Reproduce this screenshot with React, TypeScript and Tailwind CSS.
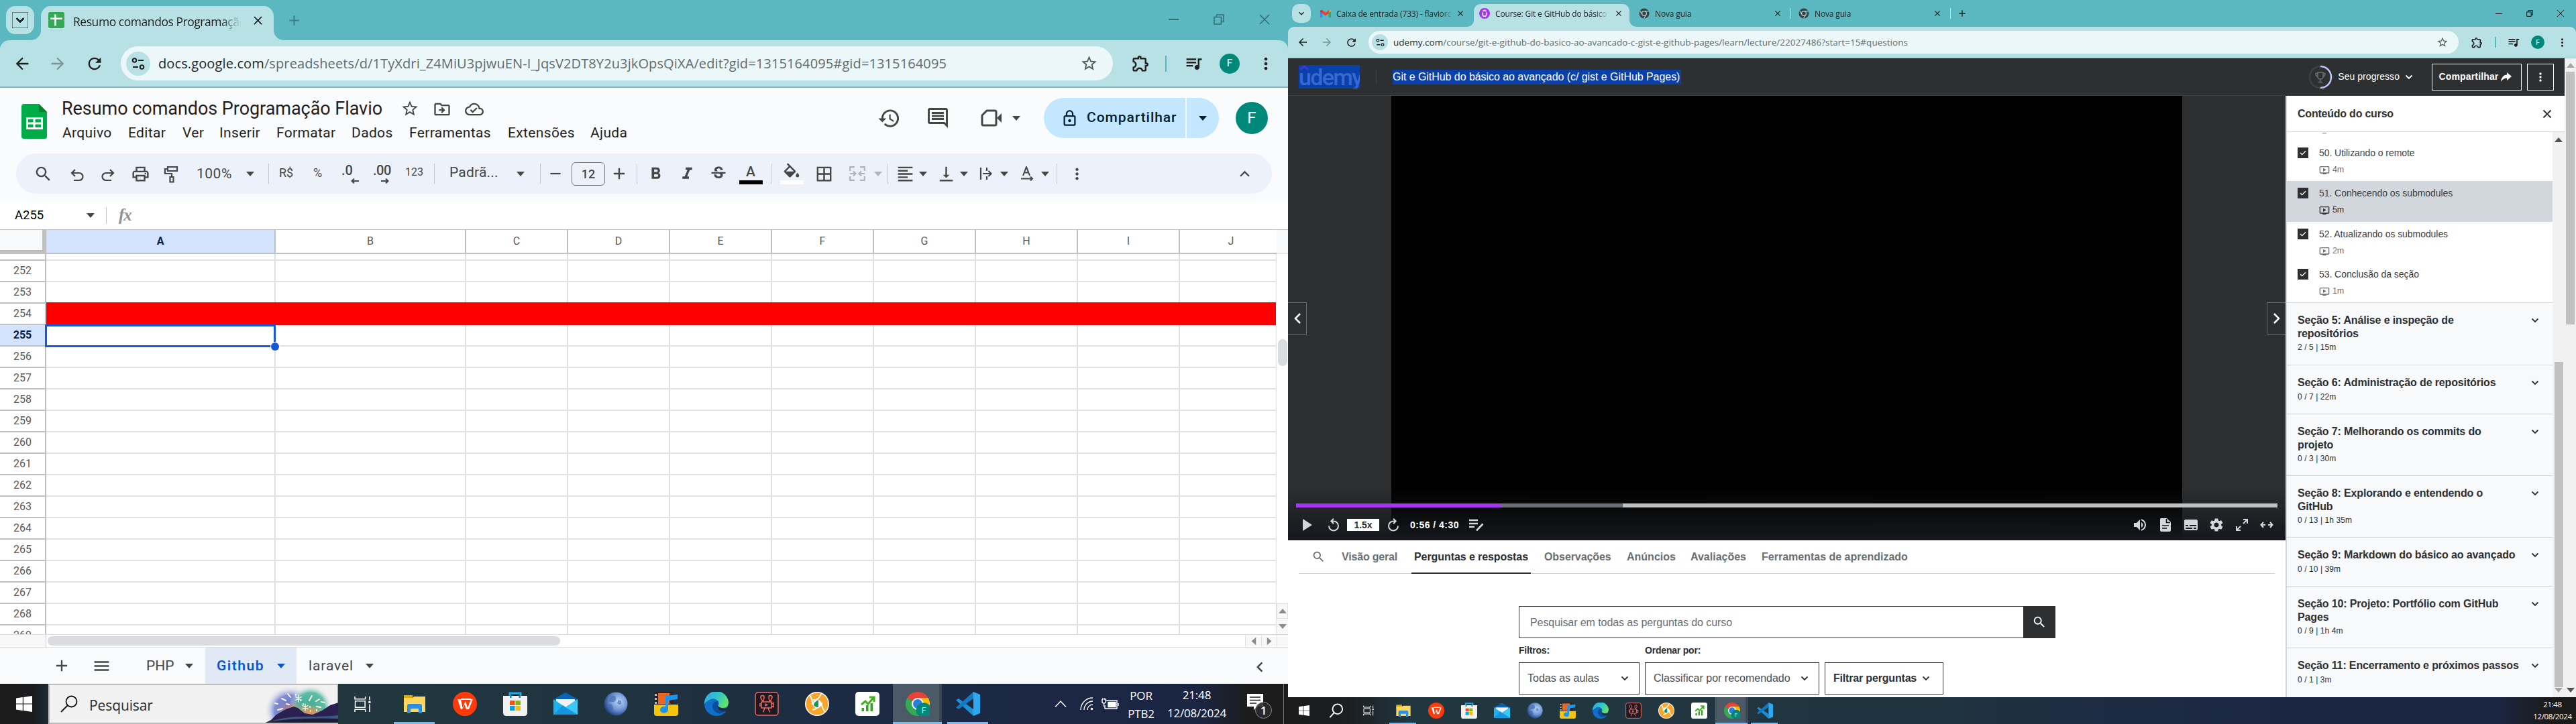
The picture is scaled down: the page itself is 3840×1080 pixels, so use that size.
import type { ReactNode } from "react";
import {
  MdAdd,
  MdArrowBack,
  MdArrowForward,
  MdBorderAll,
  MdChevronLeft,
  MdClose,
  MdExpandMore,
  MdFormatAlignLeft,
  MdFormatBold,
  MdFormatColorFill,
  MdFormatItalic,
  MdHistory,
  MdKeyboardArrowUp,
  MdLockOutline,
  MdMenu,
  MdMoreVert,
  MdOutlineCloudDone,
  MdOutlineComment,
  MdOutlineDriveFileMove,
  MdOutlineExtension,
  MdOutlinePrint,
  MdOndemandVideo,
  MdQueueMusic,
  MdRefresh,
  MdRemove,
  MdSearch,
  MdSettings,
  MdStarBorder,
  MdStrikethroughS,
  MdSubtitles,
  MdVerticalAlignBottom,
  MdVolumeUp,
} from "react-icons/md";

/* ---------- small building blocks ---------- */

function Cell({ className = "", children }: { className?: string; children?: ReactNode }) {
  return <span className={"flex shrink-0 items-center justify-center [&>svg]:shrink-0 " + className}>{children}</span>;
}

function Caret({ className = "" }: { className?: string }) {
  return (
    <svg viewBox="0 0 12 7" className={"h-[7px] w-3 shrink-0 " + className} fill="currentColor">
      <path d="M0 0h12L6 7z" />
    </svg>
  );
}

function Sep({ className = "" }: { className?: string }) {
  return <span className={"h-[30px] w-px shrink-0 bg-[#c7c7c7] " + className} />;
}

function Restore({ className = "" }: { className?: string }) {
  return (
    <svg viewBox="0 0 16 16" className={className} fill="none" stroke="currentColor" strokeWidth="1.5">
      <path d="M1 4.5h10.500v10.500H1zM4.500 4.500V1h10.500v10.500h-3.500" />
    </svg>
  );
}

function Tune({ className = "" }: { className?: string }) {
  return (
    <svg viewBox="0 0 20 20" className={className} fill="none" stroke="currentColor" strokeWidth="2">
      <circle cx="4.500" cy="5" r="2.800" />
      <path d="M10 5h8M2 15h8" />
      <circle cx="15.500" cy="15" r="2.800" />
    </svg>
  );
}

/* ---------- taskbar icons ---------- */

function WindowsLogo({ className = "" }: { className?: string }) {
  return (
    <svg viewBox="0 0 24 24" className={className} fill="#fff">
      <path d="M0 3.400 9.800 2v9.500H0zM11 1.900 24 0v11.500H11zM0 12.500h9.800V22L0 20.600zM11 12.500h13V24l-13-1.900z" />
    </svg>
  );
}

function TaskView({ className = "" }: { className?: string }) {
  return (
    <svg viewBox="0 0 24 24" className={className} fill="none" stroke="#fff" strokeWidth="1.500">
      <path d="M1 1v3.500h15V1M1 23v-3.500h15V23M1.500 7.500h14v9h-14zM22 1v5M22 12v11" />
      <path d="M20.500 9h3" strokeWidth="3" />
    </svg>
  );
}

function Explorer() {
  return (
    <svg viewBox="0 0 36 36" className="size-full">
      <path d="M2 5h13v6H2z" fill="#e8a600" />
      <path d="M2 9h13l2-2h17v23H2z" fill="#ffd65c" />
      <path d="M7 32V21q0-3 3-3h16q3 0 3 3v11h-5v-7H12v7z" fill="#2e8fe0" />
    </svg>
  );
}

function Wps() {
  return (
    <svg viewBox="0 0 36 36" className="size-full">
      <circle cx="18" cy="18" r="18" fill="#ff3a0a" />
      <path d="M7 11h5l2.500 13L19 14l3 10 5-13h3l-6 15h-4l-2.500-7-3.500 7H12z" fill="#fff" />
      <path d="M12 11h15" stroke="#fff" strokeWidth="2" />
    </svg>
  );
}

function Store() {
  return (
    <svg viewBox="0 0 36 36" className="size-full">
      <path d="M10 8V2h16v6" fill="none" stroke="#1ea7e8" strokeWidth="3" />
      <path d="M0 6h36v25q0 5-5 5H5q-5 0-5-5z" fill="#f1f1f2" />
      <path d="M10 6h2.500v3H10zM23.500 6H26v3h-2.500z" fill="#1487c4" />
      <path d="M10 13h7.500v7H10z" fill="#f25022" />
      <path d="M18.500 13H26v7h-7.500z" fill="#7fba00" />
      <path d="M10 21h7.500v7H10z" fill="#00a4ef" />
      <path d="M18.500 21H26v7h-7.500z" fill="#ffb900" />
    </svg>
  );
}

function Mail() {
  return (
    <svg viewBox="0 0 36 36" className="size-full">
      <path d="M0 11 18 1l18 10v23H0z" fill="#0a62b4" />
      <path d="M4 11h28v14H4z" fill="#f2f2f2" />
      <path d="M0 11l18 12L36 11v23H0z" fill="#1fb1ee" />
      <path d="M18 23 36 11v23H7z" fill="#3cc8f4" />
      <path d="M0 34 14 20l4 3 18 11z" fill="#1595e0" />
    </svg>
  );
}

function Moon() {
  return (
    <svg viewBox="0 0 36 36" className="size-full">
      <defs>
        <radialGradient id="moon" cx="62%" cy="40%" r="65%">
          <stop offset="0" stopColor="#bcd6f7" />
          <stop offset="0.550" stopColor="#6f96d6" />
          <stop offset="1" stopColor="#1b3d7c" />
        </radialGradient>
      </defs>
      <circle cx="18" cy="18" r="17.500" fill="url(#moon)" />
      <path d="M10 7q7-4 8 2t-5 6-5-2zM8 18q5 0 6 5t-4 4-4-5zM22 12q5 1 4 5t-6 0z" fill="#3d64a8" opacity=".6" />
    </svg>
  );
}

function Music() {
  return (
    <svg viewBox="0 0 36 36" className="size-full">
      <path d="M0 0h29v22H0z" fill="#2d2320" />
      <path d="M6 2h17v16H6z" fill="#f0641e" />
      <path d="M1 3h3v3H1zM1 9h3v3H1zM1 15h3v3H1z" fill="#bdbdbd" />
      <path d="M0 19h36v13q0 4-4 4H4q-4 0-4-4z" fill="#f7c40c" />
      <path d="M17 6l18-2v7l-14 2v14a6 5 0 1 1-4-5z" fill="#1b95f3" />
    </svg>
  );
}

function Edge() {
  return (
    <svg viewBox="0 0 36 36" className="size-full">
      <defs>
        <linearGradient id="edgeTop" x1="0" x2="1" y1="0" y2="0.500">
          <stop offset="0" stopColor="#2aa5e6" />
          <stop offset="0.600" stopColor="#33c7c8" />
          <stop offset="1" stopColor="#62e06a" />
        </linearGradient>
      </defs>
      <circle cx="18" cy="18" r="18" fill="#0f6fc9" />
      <path d="M0 18A18 18 0 0 1 36 16q0 8-9 8-7 0-6-4 2-3-1-7-6-5-13-1-5 3-7 6z" fill="url(#edgeTop)" />
      <path d="M12 20q2-7 9-6-4 3-1 9 5 6 13 3-5 8-13 6-8-3-8-12z" fill="#0b4c9c" />
      <path d="M21 14q-3 5 0 8 6 4 13 2l2-6v10l-4 1q-8 1-11-4-4-6 0-11z" fill="#1e2d3e" />
    </svg>
  );
}

function Movie() {
  return (
    <svg viewBox="0 0 36 36" className="size-full" fill="none" stroke="#ef6b5d" strokeWidth="1.500">
      <rect x="1" y="1" width="34" height="34" rx="4" fill="#1d1a26" />
      <path d="M10 15h15v9H10zM25 18l3-1.500v6L25 21M15 24.500l-2.500 6M20 24.500l2.500 6M8 17v5" />
      <path d="M12.500 14Q9 11 9 8q0-2.500 2.500-2.500T14 8q0 3-1.500 6zM22.500 14Q26 11 26 8q0-2.500-2.500-2.500T21 8q0 3 1.500 6z" />
      <path d="M15.500 17 20 19.500 15.500 22z" fill="#ef6b5d" stroke="none" />
    </svg>
  );
}

function Orange() {
  return (
    <svg viewBox="0 0 36 36" className="size-full">
      <circle cx="18" cy="18" r="18" fill="#fff" />
      <circle cx="18" cy="18" r="16.500" fill="#fba42c" />
      <path d="M7 5q5 8 4 14M30 30q-6-7-5-14M11 27q6-1 13-8M12 12q8 1 12-9" fill="none" stroke="#fff" strokeWidth="2" />
      <circle cx="18" cy="18" r="6.500" fill="#fff" />
      <path d="M20 12v11q-7 0-7-4 1-4 7-7z" fill="#15995b" />
    </svg>
  );
}

function ChartApp() {
  return (
    <svg viewBox="0 0 36 36" className="size-full">
      <rect width="36" height="36" rx="5" fill="#fff" />
      <path d="M9 19l6-5 4 4 8-9M21 8h7v7" fill="none" stroke="#3fb618" strokeWidth="3" />
      <path d="M9.500 24h3.500v5H9.500zM16 20h3.500v9H16zM22.500 17H26v12h-3.500z" fill="#2fa51e" />
    </svg>
  );
}

function Chrome() {
  return (
    <svg viewBox="0 0 36 36" className="size-full">
      <path d="M18 18 2.400 9a18 18 0 0 1 31.200 0z" fill="#ea4335" />
      <path d="M18 18V9h15.600A18 18 0 0 1 18 36z" fill="#fbbc04" />
      <path d="M2.400 9a18 18 0 0 0 15.600 27l8-13.500z" fill="#34a853" />
      <circle cx="18" cy="18" r="9" fill="#fff" />
      <circle cx="18" cy="18" r="7" fill="#2d7de0" />
      <circle cx="27" cy="27.500" r="11.300" fill="#00897b" />
      <text x="27" y="32" textAnchor="middle" fontSize="12" fontFamily="Roboto, sans-serif" fill="#cfe9e6">
        F
      </text>
    </svg>
  );
}

function VsCode() {
  return (
    <svg viewBox="0 0 36 36" className="size-full">
      <path d="M0 12.500 4 10l22 16v10z" fill="#1b8fd8" />
      <path d="M0 23.500 4 26l22-16V0z" fill="#1577bd" />
      <path d="M26 0l10 4v28l-10 4z" fill="#2fa8f0" />
    </svg>
  );
}

const APPS: { name: string; icon: ReactNode; open?: boolean; active?: boolean }[] = [
  { name: "explorer", icon: <Explorer />, open: true },
  { name: "wps", icon: <Wps /> },
  { name: "store", icon: <Store /> },
  { name: "mail", icon: <Mail /> },
  { name: "moon", icon: <Moon /> },
  { name: "music", icon: <Music /> },
  { name: "edge", icon: <Edge /> },
  { name: "movie", icon: <Movie /> },
  { name: "orange", icon: <Orange /> },
  { name: "chart", icon: <ChartApp /> },
  { name: "chrome", icon: <Chrome />, active: true },
  { name: "vscode", icon: <VsCode />, open: true },
];

function Fireworks() {
  return (
    <svg viewBox="0 0 108 56" className="h-[56px] w-[108px] shrink-0">
      <defs>
        <radialGradient id="fwBlue">
          <stop offset="0" stopColor="#5567c9" />
          <stop offset="0.600" stopColor="#6b7bd0" stopOpacity=".85" />
          <stop offset="1" stopColor="#f0f0f0" stopOpacity="0" />
        </radialGradient>
        <radialGradient id="fwGreen">
          <stop offset="0" stopColor="#3fae95" />
          <stop offset="0.650" stopColor="#4fb79f" stopOpacity=".9" />
          <stop offset="1" stopColor="#f0f0f0" stopOpacity="0" />
        </radialGradient>
        <radialGradient id="fwGlow">
          <stop offset="0" stopColor="#f58a52" />
          <stop offset="1" stopColor="#f0a060" stopOpacity="0" />
        </radialGradient>
      </defs>
      <circle cx="36" cy="38" r="38" fill="url(#fwBlue)" />
      <circle cx="67" cy="32" r="32" fill="url(#fwGreen)" />
      <ellipse cx="66" cy="40" rx="20" ry="12" fill="url(#fwGlow)" />
      <ellipse cx="38" cy="36" rx="22" ry="12" fill="url(#fwGlow)" opacity=".7" />
      <g stroke="#fff6dc" strokeWidth="2" strokeLinecap="round">
        <path d="M33 13l4 5M24 20l6 3M14 27l4 1M18 37l7-2M31 28l4 1M69 16l-4 7M80 21l-5 3M88 26l-5-1M82 33l-6-1M45 14v1M52 22v1M56 28v1M66 32v1M67 38v1M76 37v1" />
        <path d="M49 15v10M44.500 17.500l9 5M53.500 17.500l-9 5M59 28v10M55 30.500l8 5M63 30.500l-8 5" strokeWidth="1.400" />
      </g>
      <path d="M0 56 8 52 16 44l14-8 12-4 6 2 10 8 12 2 14-6 12-8 16-5v31z" fill="#2a2150" />
      <path d="M4 56q20-9 54-9t50-2v11z" fill="#3d5a80" />
      <path d="M0 56q40-8 108-6v6z" fill="#1e1a3c" />
    </svg>
  );
}

function Avatar({ className = "" }: { className?: string }) {
  return (
    <span className={"flex shrink-0 items-center justify-center rounded-full bg-[#00897b] font-['Roboto',sans-serif] text-white " + className}>F</span>
  );
}

/* ---------- spreadsheet ---------- */

const COLS = ["A", "B", "C", "D", "E", "F", "G", "H", "I", "J"];
const ROWS = [252, 253, 254, 255, 256, 257, 258, 259, 260, 261, 262, 263, 264, 265, 266, 267, 268, 269];
const GRID = "grid shrink-0 grid-cols-[69px_342px_284px_152px_152px_152px_152px_152px_152px_152px_144px] ";

function GridRow({ n, className = "h-8" }: { n?: number; className?: string }) {
  const red = n === 254;
  const selected = n === 255;
  return (
    <div className={GRID + (red ? "relative -mt-0.5 h-[34px]" : className)}>
      <div
        className={
          "flex items-center justify-center border-r-2 border-b-2 border-[#c0c0c0] text-[16px] " +
          (red ? "border-t-2 " : "") +
          (selected ? "bg-[#d3e3fd] font-bold text-[#041e49]" : "bg-white text-[#575a5a]")
        }
      >
        {n}
      </div>
      {COLS.map((c) => (
        <div
          key={c}
          className={
            red
              ? c === "J"
                ? "mr-px border-y border-[#e60000] bg-[#ff0000]"
                : "border-y border-[#e60000] bg-[#ff0000]"
              : c === "J"
                ? "border-r border-b-2 border-[#e1e1e1]"
                : "border-r-2 border-b-2 border-[#e1e1e1]"
          }
        />
      ))}
    </div>
  );
}

function MenuBar() {
  return (
    <div className="mt-0.5 flex h-7 items-center text-[21px] tracking-[0.35px] text-[#1f1f1f]">
      <span className="w-[98px] pl-px">Arquivo</span>
      <span className="w-[81px] pl-px">Editar</span>
      <span className="w-[55px] pl-px">Ver</span>
      <span className="w-[85px] pl-px">Inserir</span>
      <span className="w-[112px] pl-px">Formatar</span>
      <span className="w-[86px] pl-px">Dados</span>
      <span className="w-[147px] pl-px">Ferramentas</span>
      <span className="w-[123px] pl-px">Extensões</span>
      <span className="pl-px">Ajuda</span>
    </div>
  );
}

function SheetsToolbar() {
  return (
    <div className="mx-6 flex h-[60px] shrink-0 items-center rounded-full bg-[#edf2fa] text-[21px] whitespace-nowrap text-[#444746]">
      <Cell className="ml-7 w-6"><MdSearch className="size-[29px]" /></Cell>
      <Cell className="ml-[27px] w-6 pt-1">
        <svg viewBox="0 0 20 20" className="size-5" fill="none" stroke="currentColor" strokeWidth="2.200"><path d="M5 18h8a5.500 5.500 0 0 0 0-11H2M7 2 2 7l5 5" /></svg>
      </Cell>
      <Cell className="ml-[22px] w-6 pt-1">
        <svg viewBox="0 0 20 20" className="size-5" fill="none" stroke="currentColor" strokeWidth="2.200"><path d="M15 18H7A5.500 5.500 0 0 1 7 7h11M13 2l5 5-5 5" /></svg>
      </Cell>
      <Cell className="ml-6 w-6"><MdOutlinePrint className="size-[29px]" /></Cell>
      <Cell className="ml-[22px] w-6 pt-0.5">
        <svg viewBox="0 0 22 26" className="h-[26px] w-[22px]" fill="none" stroke="currentColor" strokeWidth="2.200"><path d="M6 2h14v6H6zM6 5H2v7h10v5M9.500 17h5v7.500h-5z" /></svg>
      </Cell>
      <span className="ml-[26px] w-[54px] pt-0.5 tracking-[0.5px]">100%</span>
      <Caret className="ml-5" />
      <Sep className="ml-[21px]" />
      <span className="ml-[15px] w-6 pb-1 text-[18px]">R$</span>
      <span className="ml-[27px] w-[17px] pb-1 text-[18px]">%</span>
      <span className="relative ml-[25px] w-[26px] pb-2.5 text-[20px] leading-none font-medium">
        .0
        <svg viewBox="0 0 12 8" className="absolute right-0 bottom-0 h-2 w-3" fill="none" stroke="currentColor" strokeWidth="2"><path d="M12 4H2M5 .5 1.500 4 5 7.500" /></svg>
      </span>
      <span className="relative ml-[21px] w-7 pb-2.5 text-[20px] leading-none font-medium tracking-[-0.5px]">
        .00
        <svg viewBox="0 0 12 8" className="absolute right-1 bottom-0 h-2 w-3" fill="none" stroke="currentColor" strokeWidth="2"><path d="M0 4h10M7 .5 10.500 4 7 7.500" /></svg>
      </span>
      <span className="ml-5 w-[27px] pb-1 text-[16px]">123</span>
      <Sep className="ml-4" />
      <span className="ml-[22px] w-[74px] pb-0.5 tracking-[0.2px]">Padrã...</span>
      <Caret className="ml-[26px]" />
      <Sep className="ml-[23px]" />
      <Cell className="ml-3 w-5"><MdRemove className="size-[26px]" /></Cell>
      <span className="ml-3.5 flex h-[35px] w-[50px] shrink-0 items-center justify-center rounded-[6px] border border-[#747775] text-[18px] font-medium">12</span>
      <Cell className="ml-[11px] w-5"><MdAdd className="size-[28px]" /></Cell>
      <Sep className="ml-4" />
      <Cell className="ml-[15px] w-6"><MdFormatBold className="size-[29px]" /></Cell>
      <Cell className="ml-[23px] w-6"><MdFormatItalic className="size-[29px]" /></Cell>
      <Cell className="ml-[23px] w-6"><MdStrikethroughS className="size-[28px]" /></Cell>
      <span className="ml-[18px] flex w-9 shrink-0 flex-col items-center pt-[1px]">
        <span className="h-6 text-[21px] leading-[22px] font-medium">A</span>
        <span className="h-1.5 w-[35px] bg-black" />
      </span>
      <Sep className="ml-3" />
      <span className="ml-3 flex w-9 shrink-0 flex-col items-center">
        <svg viewBox="0 0 24 18" className="-mt-3 h-[23px] w-[30px]"><g fill="currentColor"><MdFormatColorFill size={24} /></g></svg>
        <span className="-mb-3 mt-[3px] h-1.5 w-[35px] bg-white" />
      </span>
      <Cell className="ml-[18px] w-6"><MdBorderAll className="size-[29px]" /></Cell>
      <Cell className="ml-[25px] w-[26px] text-[#b0b4b9]">
        <svg viewBox="0 0 24 22" className="h-[22px] w-6" fill="none" stroke="currentColor" strokeWidth="2.200"><path d="M8 1.200H1.200V7M1.200 15v5.800H8M16 1.200h6.800V7M22.800 15v5.800H16M1 11h8M6 7.500 9.500 11 6 14.500M23 11h-8M18 7.500 14.500 11l3.500 3.500" /></svg>
      </Cell>
      <Caret className="ml-3 text-[#b0b4b9]" />
      <Sep className="ml-2" />
      <Cell className="ml-[13px] w-6"><MdFormatAlignLeft className="size-[29px]" /></Cell>
      <Caret className="ml-[9px]" />
      <Cell className="ml-4 w-6"><MdVerticalAlignBottom className="size-[29px]" /></Cell>
      <Caret className="ml-[9px]" />
      <Cell className="ml-[15px] w-6">
        <svg viewBox="0 0 20 20" className="size-5" fill="none" stroke="currentColor" strokeWidth="2.200"><path d="M2 1v18M11 1v5M11 14v5M5 10h12M13.500 6l4 4-4 4" /></svg>
      </Cell>
      <Caret className="ml-[9px]" />
      <Cell className="ml-4 w-6">
        <svg viewBox="0 0 20 22" className="h-[22px] w-5" fill="none" stroke="currentColor" strokeWidth="2"><path d="M4 14 9 1l5 13M5.500 9.500h7M1 18.500h17M15 15.500l3 3-3 3" /></svg>
      </Cell>
      <Caret className="ml-[9px]" />
      <Sep className="ml-[11px]" />
      <Cell className="ml-[17px] w-6"><MdMoreVert className="size-[27px]" /></Cell>
      <Cell className="mr-[29px] ml-auto w-6"><MdKeyboardArrowUp className="size-[29px]" /></Cell>
    </div>
  );
}

function SheetsWindow() {
  return (
    <section className="flex h-[1080px] w-[1920px] shrink-0 flex-col overflow-hidden bg-[#5bb8c1] whitespace-nowrap">
      {/* tab strip */}
      <div className="flex h-[60px] shrink-0 items-start font-['Open_Sans',sans-serif] text-[#1f1f1f]">
        <Cell className="mt-[9px] ml-[9px] size-[42px] rounded-[14px] bg-[#b8e1e5]"><MdExpandMore className="size-6" strokeWidth={1} stroke="currentColor" /></Cell>
        <div className="relative mt-[9px] ml-[10px] flex h-[51px] w-[347px] items-center rounded-t-[15px] bg-[#b8e1e5] pb-[9px] before:absolute before:bottom-0 before:-left-[15px] before:size-[15px] before:rounded-br-[15px] before:shadow-[6px_6px_0_6px_#b8e1e5] after:absolute after:-right-[15px] after:bottom-0 after:size-[15px] after:rounded-bl-[15px] after:shadow-[-6px_6px_0_6px_#b8e1e5]">
          <svg viewBox="0 0 24 24" className="z-10 ml-[11px] size-6 shrink-0">
            <rect width="24" height="24" rx="3" fill="#34a853" />
            <path d="M3 9.800h18M10.500 3.500v17" stroke="#fff" strokeWidth="2.600" />
          </svg>
          <span className="ml-[13px] w-[250px] overflow-hidden mask-r-from-88% pt-1 text-[17.500px] tracking-[-0.45px]">Resumo comandos Programação</span>
          <Cell className="ml-[15px] w-5"><MdClose className="size-[21px]" /></Cell>
        </div>
        <Cell className="mt-[9px] ml-[21px] h-[42px] w-[18px] text-[#3d8088]"><MdAdd className="size-[25px]" /></Cell>
        <div className="mr-px ml-auto flex h-[58px] items-center text-[#356f76]">
          <Cell className="w-[68px]"><span className="h-0.5 w-[15px] bg-current" /></Cell>
          <Cell className="w-[68px]"><Restore className="size-4" /></Cell>
          <Cell className="w-[68px]"><svg viewBox="0 0 16 16" className="size-4" stroke="currentColor" strokeWidth="1.500"><path d="M1 1l14 14M15 1 1 15" /></svg></Cell>
        </div>
      </div>
      {/* address bar */}
      <div className="relative flex h-[71px] shrink-0 items-center rounded-t-[14px] border-b-2 border-[#8fb3b9] bg-[#b8e1e5] text-[#1f1f1f]">
        <Cell className="ml-[19px] w-7"><MdArrowBack className="size-[28px]" /></Cell>
        <Cell className="ml-[25px] w-7 text-[#78959a]"><MdArrowForward className="size-[28px]" /></Cell>
        <Cell className="ml-[27px] w-7"><MdRefresh className="size-[28px]" /></Cell>
        <div className="ml-[25px] flex h-[51px] w-[1479px] items-center rounded-full bg-[#ebf7f8]">
          <Cell className="ml-2 size-9 rounded-full bg-[#b8e1e5]"><Tune className="size-5" /></Cell>
          <span className="ml-3 font-['Open_Sans',sans-serif] text-[20px] tracking-[0.12px] text-[#5f6b6d]">
            <span className="text-[#1f1f1f]">docs.google.com</span>/spreadsheets/d/1TyXdri_Z4MiU3pjwuEN-I_JqsV2DT8Y2u3jkOpsQiXA/edit?gid=1315164095#gid=1315164095
          </span>
          <Cell className="mr-[22px] ml-auto w-7 text-[#4a5759]"><MdStarBorder className="size-[27px]" /></Cell>
        </div>
        <Cell className="ml-[27px] w-7"><MdOutlineExtension className="size-[29px]" /></Cell>
        <span className="ml-[23px] h-6 w-0.5 bg-[#5bb8c1]" />
        <Cell className="ml-[26px] w-7"><MdQueueMusic className="size-[29px]" /></Cell>
        <Avatar className="ml-[25px] size-[30px] text-[15px]" />
        <Cell className="ml-[27px] w-6"><MdMoreVert className="size-[28px]" /></Cell>
      </div>

      <div className="flex flex-1 flex-col overflow-hidden bg-[#f9fbfd] font-['Roboto',sans-serif]">
        {/* document header */}
        <div className="flex h-[98px] shrink-0 items-start">
          <svg viewBox="0 0 38 52" className="mt-6 ml-8 h-[52px] w-[38px] shrink-0">
            <path d="M3.500 0H26l12 12v36.500q0 3.500-3.500 3.500h-31Q0 52 0 48.500v-45Q0 0 3.500 0z" fill="#00ac47" />
            <path d="M26 0l12 12H26z" fill="#00832d" />
            <path d="M7 20h25v18H7zM10 23v4.500h7.500V23zm10.500 0v4.500H29V23zM10 30.500V35h7.500v-4.500zm10.500 0V35H29v-4.500z" fill="#fff" fillRule="evenodd" />
          </svg>
          <div className="ml-[22px] flex flex-col pt-[10px]">
            <div className="flex h-[42px] items-center text-[#444746]">
              <span className="w-[478px] text-[27px] tracking-[-0.05px] text-[#1f1f1f]">Resumo comandos Programação Flavio</span>
              <Cell className="ml-7 w-[26px]"><MdStarBorder className="size-[28px]" /></Cell>
              <Cell className="ml-[22px] w-[26px] pt-0.5"><MdOutlineDriveFileMove className="size-[28px]" /></Cell>
              <Cell className="ml-[21px] w-7 pt-0.5"><MdOutlineCloudDone className="size-[28px]" /></Cell>
            </div>
            <MenuBar />
          </div>
          <div className="mr-[30px] ml-auto flex h-[90px] items-center text-[#444746]">
            <Cell className="w-[34px]"><MdHistory className="size-[35px]" /></Cell>
            <Cell className="ml-10 w-8"><MdOutlineComment className="size-[36px]" /></Cell>
            <Cell className="ml-12 w-8">
              <svg viewBox="0 0 32 26" className="h-[26px] w-8">
                <path d="M9 2h12q2 0 2 2v18q0 2-2 2H4q-2 0-2-2V9z" fill="none" stroke="currentColor" strokeWidth="3" strokeLinejoin="round" />
                <path d="M24 13l7-7v14z" fill="currentColor" />
              </svg>
            </Cell>
            <Caret className="ml-[15px]" />
            <div className="ml-[35px] flex h-[60px] w-[261px] items-center rounded-full bg-[#c2e7ff] text-[#001d35]">
              <Cell className="ml-[26px] w-6"><MdLockOutline className="size-[27px]" /></Cell>
              <span className="ml-3.5 w-[136px] text-[21px] font-medium tracking-[0.95px]">Compartilhar</span>
              <span className="ml-[11px] h-[60px] w-0.5 bg-[#f9fbfd]" />
              <Caret className="ml-[18px]" />
            </div>
            <Avatar className="ml-[25px] size-12 text-[24px]" />
          </div>
        </div>
        <SheetsToolbar />
        {/* formula bar */}
        <div className="mt-3 flex h-[42px] shrink-0 items-center border-b border-[#c0c0c0] bg-white">
          <span className="ml-[22px] w-[50px] text-[18.500px] text-black">A255</span>
          <Caret className="ml-[57px] text-[#444746]" />
          <span className="ml-[17px] h-[25px] w-px bg-[#c7c7c7]" />
          <span className="ml-[18px] pb-0.5 font-['Liberation_Serif',serif] text-[25px] font-bold tracking-[-1px] text-[#8f9191] italic">fx</span>
        </div>
        {/* grid */}
        <div className="flex h-[603px] shrink-0 bg-white">
          <div className="relative flex h-[603px] w-[1903px] shrink-0 flex-col overflow-hidden">
            <div className={GRID + "h-9 text-[16px] text-[#575a5a]"}>
              <div className="border-r-[6px] border-b-[6px] border-[#c0c0c0] bg-[#f8f9fa]" />
              {COLS.map((c) => (
                <div
                  key={c}
                  className={
                    "flex items-center justify-center border-b-2 border-[#c0c0c0] " +
                    (c === "A" ? "border-r-2 bg-[#d3e3fd] font-bold text-[#041e49]" : c === "J" ? "bg-white pl-2" : "border-r-2 bg-white")
                  }
                >
                  {c}
                </div>
              ))}
            </div>
            <GridRow className="h-2.5" />
            {ROWS.map((n) => (
              <GridRow key={n} n={n} />
            ))}
            {/* selection frame drawn over the cells */}
            <div className="absolute top-[141px] left-[67px] h-[34px] w-[344px] border-[3px] border-[#1558d6]">
              <span className="absolute -right-2 -bottom-2 size-3 rounded-full bg-[#1558d6] ring-1 ring-white" />
            </div>
          </div>
          <div className="flex w-[17px] flex-col">
            <div className="h-9 border-b border-[#e1e1e1] bg-[#f8f9fa]" />
            <span className="mt-[127px] ml-0.5 h-10 w-3.5 rounded-full bg-[#dadce0]" />
            <div className="mt-auto flex h-[46px] flex-col bg-[#f8f8f8] text-[#8b8b8b]">
              <Cell className="h-[23px] border border-[#e1e1e1]"><Caret className="h-[6px] w-2 rotate-180" /></Cell>
              <Cell className="h-[23px]"><Caret className="h-[6px] w-2" /></Cell>
            </div>
          </div>
        </div>
        {/* horizontal scroll */}
        <div className="flex h-5 shrink-0 items-center border-y border-[#dadce0] bg-white text-[#8b8b8b]">
          <span className="h-full w-[69px] border-r border-[#d0d0d0] bg-[#f8f8f8]" />
          <span className="ml-0.5 h-3.5 w-[764px] rounded-full bg-[#dadce0]" />
          <Cell className="ml-auto h-full w-6 border-l border-[#e1e1e1] bg-[#f8f8f8]"><Caret className="h-[6px] w-2 rotate-90" /></Cell>
          <Cell className="h-full w-6 border-x border-[#e1e1e1] bg-[#f8f8f8]"><Caret className="h-[6px] w-2 -rotate-90" /></Cell>
          <span className="h-full w-4 bg-[#f8f8f8]" />
        </div>
        {/* sheet tabs */}
        <div className="flex h-[54px] shrink-0 items-center text-[21px] text-[#444746]">
          <Cell className="ml-[78px] w-7"><MdAdd className="size-[28px]" /></Cell>
          <Cell className="ml-[31px] w-7"><MdMenu className="size-[29px]" /></Cell>
          <span className="ml-[53px] w-[42px] pt-0.5">PHP</span>
          <Caret className="ml-4" />
          <div className="ml-[18px] flex h-full w-[136px] items-center bg-[#e1e9f7] text-[#0b57d0]">
            <span className="ml-[17px] w-[73px] pt-0.5 font-semibold tracking-[1.500px]">Github</span>
            <Caret className="ml-[17px]" />
          </div>
          <span className="ml-[18px] w-[68px] pt-0.5 tracking-[0.9px]">laravel</span>
          <Caret className="ml-[17px]" />
          <Cell className="mt-1 mr-7 ml-auto w-7"><MdChevronLeft className="size-[30px]" /></Cell>
        </div>
      </div>

      {/* taskbar */}
      <div className="flex h-[60px] shrink-0 items-center font-['Open_Sans',sans-serif] [background-image:linear-gradient(90deg,#1b1b1b_0,#1b1c1e_50px,#1c3038_76px,#21373f_520px,#20343f_900px,#1d2c42_1200px,#1b2845_1500px,#1b2644_1780px,#1c1c1e_1860px,#1b1b1b_1920px)]">
        <Cell className="w-[72px]"><WindowsLogo className="size-6" /></Cell>
        <div className="flex h-[60px] w-[432px] shrink-0 items-center border-2 border-[#bdbdbd] bg-[#f1f1f1]">
          <svg viewBox="0 0 26 26" className="ml-4 size-[26px] shrink-0" fill="none" stroke="#111" strokeWidth="1.800"><circle cx="16.500" cy="9.500" r="8" /><path d="M10.500 15.500 1 25" /></svg>
          <span className="ml-[17px] pt-1.5 text-[21px] tracking-[-0.1px] text-[#2b2b2b]">Pesquisar</span>
          <div className="-mr-0.5 ml-auto"><Fireworks /></div>
        </div>
        <Cell className="w-[72px]"><TaskView className="size-[25px]" /></Cell>
        <div className="ml-1 flex h-full">
          {APPS.map((a) => (
            <div key={a.name} className="relative flex h-full w-[75px] items-center justify-center">
              {a.active && <span className="absolute inset-y-0 right-px left-px border-r-4 border-[#3b4854] bg-[#4c5a67]" />}
              <span className="relative size-9">{a.icon}</span>
              {(a.open || a.active) && (
                <span className={a.active ? "absolute bottom-0 left-px h-[3px] w-[73px] bg-[#76b9ed]" : "absolute bottom-0 left-[7px] h-[3px] w-[61px] bg-[#76b9ed]"} />
              )}
            </div>
          ))}
        </div>
        <div className="ml-auto flex h-full items-center text-[17px] tracking-[-0.2px] text-white">
          <svg viewBox="0 0 18 10" className="h-[18px] w-[18px]" fill="none" stroke="#fff" strokeWidth="1.500"><path d="M1 9.500 9 1l8 8.500" /></svg>
          <svg viewBox="0 0 20 20" className="ml-5 size-5" fill="none" stroke="#fff" strokeWidth="1.300"><path d="M1 19A18 18 0 0 1 19 1M6 19A13 13 0 0 1 19 6M11 19a8 8 0 0 1 8-8" /><circle cx="17.500" cy="17.500" r="1.800" fill="#fff" stroke="none" /></svg>
          <svg viewBox="0 0 26 18" className="ml-3 h-[18px] w-[26px]" fill="none" stroke="#fff" strokeWidth="1.400"><path d="M7 4h16v12H5v-5M25 8v4" /><path d="M10 6.500h11v7H10z" fill="#fff" /><path d="M1 2v4q0 2 2.500 2T6 6V2M3.500 8v5M2 0v3M5 0v3" /></svg>
          <div className="ml-3.5 flex w-[38px] flex-col items-center pt-0.5 leading-[27px]">
            <span>POR</span>
            <span>PTB2</span>
          </div>
          <div className="ml-[17px] flex w-[94px] flex-col items-center leading-[27px]">
            <span>21:48</span>
            <span>12/08/2024</span>
          </div>
          <div className="relative ml-7 h-[30px] w-[46px]">
            <svg viewBox="0 0 24 24" className="size-6"><path d="M0 0h24v19h-9l-5 5v-5H0z" fill="#fff" /><path d="M4 5h16M4 9.500h16M4 14h10" stroke="#1b1b1b" strokeWidth="1.300" /></svg>
            <span className="absolute top-3 left-3 flex size-[25px] items-center justify-center rounded-full border border-[#8b8b8b] bg-[#2b2b2b]/90 text-[17px] font-semibold">1</span>
          </div>
          <span className="mr-1.5 ml-2 h-full w-px bg-[#7a7a7a]" />
        </div>
      </div>
    </section>
  );
}

/* ---------- course window ---------- */

function BgTab({ icon, label, className, sep }: { icon: ReactNode; label: string; className: string; sep?: boolean }) {
  return (
    <div className={"flex h-7 shrink-0 items-center " + className}>
      {icon}
      <span className="ml-2 flex-1 overflow-hidden mask-r-from-90% pt-0.5">{label}</span>
      <MdClose className="ml-1 size-3.5 shrink-0" />
      <span className={sep ? "ml-3 h-4 w-px bg-[#b8e1e5]" : "ml-3 h-4 w-px"} />
    </div>
  );
}

function ChromeMono() {
  return (
    <svg viewBox="0 0 16 16" className="size-4 shrink-0">
      <circle cx="8" cy="8" r="7.500" fill="#3c4043" />
      <circle cx="8" cy="8" r="3.400" fill="none" stroke="#9fd3d8" strokeWidth="1.300" />
      <path d="M8 4.600h6.800M5 9.700 1.700 3.900M10.900 9.700 7.600 15.400" stroke="#9fd3d8" strokeWidth="1.100" />
    </svg>
  );
}

const LECTURES = [
  { title: "50. Utilizando o remote", time: "4m", cls: "h-[60px] bg-white" },
  { title: "51. Conhecendo os submodules", time: "5m", cls: "h-[61px] bg-[#d1d7dc]", current: true },
  { title: "52. Atualizando os submodules", time: "2m", cls: "h-[60px] bg-white" },
  { title: "53. Conclusão da seção", time: "1m", cls: "h-[60px] bg-white" },
];

const SECTIONS = [
  { lines: ["Seção 5: Análise e inspeção de", "repositórios"], meta: "2 / 5 | 15m", h: "h-[93px]" },
  { lines: ["Seção 6: Administração de repositórios"], meta: "0 / 7 | 22m", h: "h-[73px]" },
  { lines: ["Seção 7: Melhorando os commits do", "projeto"], meta: "0 / 3 | 30m", h: "h-[92px]" },
  { lines: ["Seção 8: Explorando e entendendo o", "GitHub"], meta: "0 / 13 | 1h 35m", h: "h-[92px]" },
  { lines: ["Seção 9: Markdown do básico ao avançado"], meta: "0 / 10 | 39m", h: "h-[73px]" },
  { lines: ["Seção 10: Projeto: Portfólio com GitHub", "Pages"], meta: "0 / 9 | 1h 4m", h: "h-[92px]" },
  { lines: ["Seção 11: Encerramento e próximos passos"], meta: "0 / 1 | 3m", h: "h-[74px]" },
];

function Chevron({ className = "" }: { className?: string }) {
  return (
    <svg viewBox="0 0 12 8" className={"h-2 w-3 shrink-0 " + className} fill="none" stroke="currentColor" strokeWidth="1.800">
      <path d="M1.500 1.500 6 6l4.500-4.500" />
    </svg>
  );
}

function PlayerControls() {
  return (
    <div className="absolute inset-x-0 bottom-0 flex h-[80px] flex-col bg-linear-to-b from-transparent to-[#15181c] text-[#d1d7dc]">
      <div className="mt-[25px] mr-3 ml-3 flex h-1.5 shrink-0">
        <span className="w-[306px] bg-[#a435f0]" />
        <span className="w-[181px] bg-[#6a6f73]" />
        <span className="flex-1 bg-[#c0c0c0]" />
      </div>
      <div className="mt-[13px] flex h-[26px] items-center">
        <svg viewBox="0 0 14 18" className="ml-[22px] h-[18px] w-3.5" fill="currentColor"><path d="M0 0l14 9-14 9z" /></svg>
        <svg viewBox="0 0 18 20" className="ml-[23px] h-5 w-[18px]" fill="none" stroke="currentColor" strokeWidth="2"><path d="M2 11.500a7 7 0 1 0 7-7H5.500M9 .8 5.300 4.500 9 8.200" /></svg>
        <span className="ml-[11px] flex h-[18px] w-12 items-center justify-center bg-white text-[14px] font-bold text-[#2d2f31]">1.5x</span>
        <svg viewBox="0 0 18 20" className="ml-3 h-5 w-[18px]" fill="none" stroke="currentColor" strokeWidth="2"><path d="M16 11.500a7 7 0 1 1-7-7h3.500M9 .8l3.700 3.700L9 8.200" /></svg>
        <span className="ml-4 w-[74px] text-[14px] font-bold tracking-[0.48px] text-white">0:56 / 4:30</span>
        <svg viewBox="0 0 22 18" className="ml-[14px] h-[18px] w-[22px]" fill="none" stroke="currentColor" strokeWidth="2.600"><path d="M0 2h13M0 7h13M0 12h8M11 17.500l9.500-10" /></svg>
        <div className="mr-[18px] ml-auto flex items-center">
          <MdVolumeUp className="size-6" />
          <svg viewBox="0 0 16 20" className="ml-[18px] h-5 w-4"><path d="M2 0h8l6 6v12q0 2-2 2H2q-2 0-2-2V2Q0 0 2 0z" fill="currentColor" /><path d="M9.500 1v5.500H15M3 11h10M3 15h7" stroke="#111417" strokeWidth="1.600" fill="none" /></svg>
          <MdSubtitles className="ml-[18px] size-6" />
          <MdSettings className="ml-[14px] size-6" />
          <svg viewBox="0 0 18 18" className="ml-[17px] size-[18px]" fill="none" stroke="currentColor" strokeWidth="2"><path d="M11 1h6v6M17 1l-6 6M7 17H1v-6M1 17l6-6" /></svg>
          <svg viewBox="0 0 20 10" className="ml-[18px] h-2.5 w-5" fill="none" stroke="currentColor" strokeWidth="2"><path d="M8 5H1.500M5 1 1.500 5 5 9M12 5h6.500M15 1l3.500 4L15 9" /></svg>
        </div>
      </div>
    </div>
  );
}

function CourseMain() {
  return (
    <div className="flex w-[1487px] shrink-0 flex-col bg-white">
      <div className="relative flex h-[663px] shrink-0 bg-[#2d2f31]">
        <div className="ml-[154px] w-[1179px] bg-black" />
        <Cell className="absolute top-[308px] left-0 h-12 w-7 border border-l-0 border-[#6a6f73] bg-[#2d2f31] text-white">
          <svg viewBox="0 0 10 16" className="h-4 w-2.5" fill="none" stroke="currentColor" strokeWidth="2.500"><path d="M9 1 2 8l7 7" /></svg>
        </Cell>
        <Cell className="absolute top-[308px] right-0 h-12 w-7 border border-r-0 border-[#6a6f73] bg-[#2d2f31] text-white">
          <svg viewBox="0 0 10 16" className="h-4 w-2.5" fill="none" stroke="currentColor" strokeWidth="2.500"><path d="M1 1l7 7-7 7" /></svg>
        </Cell>
        <PlayerControls />
      </div>
      <div className="mx-4 flex h-[50px] shrink-0 items-center border-b border-[#d1d7dc] text-[16px] font-bold text-[#6a6f73]">
        <MdSearch className="ml-[19px] size-[21px]" />
        <span className="ml-6 w-[83px] tracking-[-0.180px]">Visão geral</span>
        <span className="-mb-px ml-[21px] flex h-[50px] w-[178px] items-center justify-center border-b-2 border-[#2d2f31] pt-px tracking-[-0.080px] text-[#2d2f31]">Perguntas e respostas</span>
        <span className="ml-5 w-[99px] tracking-[-0.080px]">Observações</span>
        <span className="ml-6 w-[71px]">Anúncios</span>
        <span className="ml-6 w-[83px]">Avaliações</span>
        <span className="ml-[23px]">Ferramentas de aprendizado</span>
      </div>
      <div className="mt-[48px] ml-[344px] flex h-12 shrink-0 text-[#6a6f73]">
        <div className="flex w-[752px] items-center border border-r-0 border-[#2d2f31] pt-0.5 pl-4 text-[16px] tracking-[-0.080px]">Pesquisar em todas as perguntas do curso</div>
        <Cell className="h-12 w-12 bg-[#2d2f31] text-white"><MdSearch className="size-[22px]" /></Cell>
      </div>
      <div className="mt-[9px] ml-[344px] flex h-[18px] shrink-0 items-center text-[14px] font-bold tracking-[-0.2px] text-[#2d2f31]">
        <span className="w-[188px]">Filtros:</span>
        <span>Ordenar por:</span>
      </div>
      <div className="mt-[9px] ml-[344px] flex h-12 shrink-0 gap-2 text-[16px] text-[#2d2f31]">
        <div className="flex w-[180px] items-center justify-between border border-[#2d2f31] pr-[15px] pl-3 text-[#4b4e51]">Todas as aulas<Chevron className="text-[#2d2f31]" /></div>
        <div className="flex w-[260px] items-center justify-between border border-[#2d2f31] pr-[15px] pl-3 text-[#4b4e51]">Classificar por recomendado<Chevron className="text-[#2d2f31]" /></div>
        <div className="flex w-[177px] items-center border border-[#2d2f31] pl-3 font-bold tracking-[-0.180px]">Filtrar perguntas<Chevron className="ml-2" /></div>
      </div>
    </div>
  );
}

function CourseSidebar() {
  return (
    <aside className="flex w-[416px] shrink-0 flex-col border-l-2 border-[#d1d7dc] bg-white text-[#2d2f31]">
      <div className="flex h-[54px] shrink-0 items-center border-b border-[#d1d7dc] pr-[19px] pl-4">
        <span className="text-[16px] font-bold tracking-[-0.22px]">Conteúdo do curso</span>
        <svg viewBox="0 0 14 14" className="ml-auto size-3.5" stroke="currentColor" strokeWidth="2"><path d="M1.500 1.500l11 11M12.500 1.500l-11 11" /></svg>
      </div>
      <div className="flex h-[843px] shrink-0">
        <div className="flex w-[396px] shrink-0 flex-col bg-[#f7f9fa]">
          <div className="flex h-[13px] shrink-0 items-start bg-white pl-[53px]"><span className="mt-px h-px w-1.5 bg-[#6a6f73]" /></div>
          {LECTURES.map((l) => (
            <div key={l.title} className={"flex shrink-0 items-start pl-4 " + l.cls}>
              <span className="mt-[10px] flex size-4 items-center justify-center bg-[#2d2f31]">
                <svg viewBox="0 0 10 8" className="h-2 w-2.5" fill="none" stroke="#fff" strokeWidth="1.300"><path d="M1 4l2.700 2.700L9 1.300" /></svg>
              </span>
              <div className="ml-4 flex flex-col">
                <span className="mt-[8px] h-5 text-[14px] leading-5 tracking-[-0.060px] text-[#3c3e40]">{l.title}</span>
                <span className={"mt-[7px] flex h-4 items-center text-[12.500px] tracking-[-0.2px] " + (l.current ? "text-[#2d2f31]" : "text-[#6a6f73]")}>
                  <MdOndemandVideo className="mt-px mr-1 size-4" />
                  {l.time}
                </span>
              </div>
            </div>
          ))}
          {SECTIONS.map((s) => (
            <div key={s.meta} className={"flex shrink-0 items-start justify-between border-t border-[#d1d7dc] bg-[#f7f9fa] pt-4 pr-5 pl-4 " + s.h}>
              <div className="flex flex-col">
                {s.lines.map((t) => (
                  <span key={t} className="text-[16px] leading-[19.500px] font-bold tracking-[-0.140px]">{t}</span>
                ))}
                <span className="mt-[3px] text-[12px] leading-[17px] tracking-[0.080px]">{s.meta}</span>
              </div>
              <Chevron className="mt-1.5" />
            </div>
          ))}
        </div>
        <div className="flex w-[18px] shrink-0 flex-col items-center bg-[#f1f1f1] pt-2 pb-[7px]">
          <Caret className="h-1 w-2 rotate-180 text-[#505050]" />
          <span className="mt-[328px] h-[485px] w-[13px] bg-[#c1c1c1]" />
          <Caret className="mt-auto h-1 w-2 text-[#a3a3a3]" />
        </div>
      </div>
    </aside>
  );
}

function CourseWindow() {
  return (
    <section className="flex h-[1080px] w-[1920px] shrink-0 flex-col overflow-hidden bg-[#5bb8c1] whitespace-nowrap">
      <div className="flex h-10 shrink-0 items-start font-['Open_Sans',sans-serif] text-[12px] tracking-[-0.150px] text-[#1f1f1f]">
        <Cell className="mt-1.5 ml-1.5 size-7 rounded-[10px] bg-[#b8e1e5]"><MdExpandMore className="size-4" stroke="currentColor" /></Cell>
        <BgTab
          className="mt-1.5 ml-[14px] w-[229px]"
          label="Caixa de entrada (733) - flaviorc"
          icon={
            <svg viewBox="0 0 16 12" className="h-3 w-4 shrink-0">
              <path d="M0 2v10h3.500V5z" fill="#4285f4" />
              <path d="M16 2v10h-3.500V5z" fill="#34a853" />
              <path d="M0 1.800 3.500 1v4.500L0 3z" fill="#c5221f" />
              <path d="M16 1.800 12.500 1v4.500L16 3z" fill="#fbbc04" />
              <path d="M2.500.6 8 4.800 13.500.6v4.800L8 9.500 2.500 5.400z" fill="#ea4335" />
            </svg>
          }
        />
        <div className="relative mt-1.5 flex h-[34px] w-[232px] items-center rounded-t-[10px] bg-[#b8e1e5] pb-1.5 before:absolute before:bottom-0 before:-left-[10px] before:size-[10px] before:rounded-br-[10px] before:shadow-[4px_4px_0_4px_#b8e1e5] after:absolute after:-right-[10px] after:bottom-0 after:size-[10px] after:rounded-bl-[10px] after:shadow-[-4px_4px_0_4px_#b8e1e5]">
          <svg viewBox="0 0 16 16" className="z-10 ml-2 size-4 shrink-0"><circle cx="8" cy="8" r="8" fill="#a435f0" /><path d="M5.300 6.500V10q0 2.300 2.700 2.300t2.700-2.300V6.500M5.500 4.800 8 3.300l2.500 1.500" stroke="#fff" strokeWidth="1.600" fill="none" /></svg>
          <span className="ml-2 w-[168px] overflow-hidden mask-r-from-90% pt-0.5">Course: Git e GitHub do básico a</span>
          <MdClose className="ml-[9px] size-3.5 shrink-0" />
        </div>
        <BgTab className="mt-1.5 ml-[14px] w-[227px]" label="Nova guia" icon={<ChromeMono />} sep />
        <BgTab className="mt-1.5 ml-[11px] w-[227px]" label="Nova guia" icon={<ChromeMono />} sep />
        <Cell className="mt-1.5 ml-[9px] h-7 w-4"><MdAdd className="size-4" /></Cell>
        <div className="ml-auto flex h-10 items-center text-black">
          <Cell className="w-[46px]"><span className="h-px w-2.5 bg-current" /></Cell>
          <Cell className="w-[46px]"><Restore className="size-2.5" /></Cell>
          <Cell className="w-[46px]"><svg viewBox="0 0 10 10" className="size-2.5" stroke="currentColor"><path d="M0 0l10 10M10 0 0 10" /></svg></Cell>
        </div>
      </div>
      <div className="relative flex h-[47px] shrink-0 items-center rounded-t-[9px] border-b border-[#8fb3b9] bg-[#b8e1e5] text-[#1f1f1f]">
        <MdArrowBack className="ml-[13px] size-[18px]" />
        <MdArrowForward className="ml-[18px] size-[18px] text-[#78959a]" />
        <MdRefresh className="ml-[18px] size-[19px]" />
        <div className="ml-4 flex h-[34px] w-[1625px] items-center rounded-full bg-[#ebf7f8]">
          <Cell className="ml-[5px] size-6 rounded-full bg-[#b8e1e5]"><Tune className="size-[13px]" /></Cell>
          <span className="ml-2 font-['Open_Sans',sans-serif] text-[13.500px] tracking-[0.020px] text-[#5f6b6d]">
            <span className="text-[#1f1f1f]">udemy.com</span>/course/git-e-github-do-basico-ao-avancado-c-gist-e-github-pages/learn/lecture/22027486?start=15#questions
          </span>
          <MdStarBorder className="mr-[15px] ml-auto size-[18px] text-[#4a5759]" />
        </div>
        <MdOutlineExtension className="ml-[18px] size-[19px]" />
        <span className="ml-[17px] h-4 w-0.5 bg-[#5bb8c1]" />
        <MdQueueMusic className="ml-[16px] size-[20px]" />
        <Avatar className="ml-4 size-5 text-[10px]" />
        <MdMoreVert className="ml-[17px] size-[19px]" />
      </div>
      <div className="flex h-[953px] shrink-0 font-['Liberation_Sans',Arial,sans-serif]">
        <div className="flex w-[1903px] shrink-0 flex-col">
          <header className="flex h-14 shrink-0 items-center border-b border-[#3e4143] bg-[#2d2f31] text-white">
            <span className="relative ml-4 h-[35px] w-[91px] overflow-hidden bg-[#0a40aa] font-['Roboto',sans-serif] text-[34px] leading-[36px] font-medium tracking-[-1.700px] text-[#3868d4]">
              udemy
              <svg viewBox="0 0 14 8" className="absolute top-0 left-px h-2 w-3.5" fill="none" stroke="#3a3ad8" strokeWidth="3"><path d="M1 7l6-5 6 5" /></svg>
            </span>
            <span className="ml-6 h-[22px] w-px bg-[#3e4143]" />
            <span className="ml-6 flex h-[22px] w-[430px] items-center bg-[#0a40aa] text-[16px] tracking-[-0.050px]">Git e GitHub do básico ao avançado (c/ gist e GitHub Pages)</span>
            <svg viewBox="0 0 36 36" className="mr-2 ml-auto size-9" fill="none">
              <circle cx="18" cy="18" r="16" stroke="#3e4143" strokeWidth="2.500" />
              <path d="M18 2a16 16 0 0 1 0 32" stroke="#c0c4fc" strokeWidth="2.500" />
              <path d="M14 11h8v6q0 4-4 4t-4-4zM14 12.500h-3q0 4.500 3.500 5M22 12.500h3q0 4.500-3.500 5M18 21v4M14.500 25.500h7" stroke="#6a6f73" strokeWidth="1.500" />
            </svg>
            <span className="text-[14px] tracking-[0.050px]">Seu progresso</span>
            <Chevron className="ml-2" />
            <span className="ml-7 flex h-10 w-[134px] items-center justify-center border border-white pr-1 text-[14px] font-bold tracking-[0.150px]">
              Compartilhar
              <svg viewBox="0 0 16 14" className="ml-1 h-3.5 w-4" fill="currentColor"><path d="M9 0l7 6-7 6V8.500Q3.500 8.500 0 14 1 4 9 3.500z" /></svg>
            </span>
            <Cell className="mr-4 ml-2 h-10 w-10 border border-white"><MdMoreVert className="size-5" /></Cell>
          </header>
          <div className="flex flex-1 overflow-hidden">
            <CourseMain />
            <CourseSidebar />
          </div>
        </div>
        <div className="flex w-[17px] shrink-0 flex-col items-center bg-[#f1f1f1] pt-[7px] pb-[7px]">
          <Caret className="h-1 w-2 rotate-180 text-[#a3a3a3]" />
          <span className="mt-[6px] h-[377px] w-[13px] bg-[#c1c1c1]" />
          <Caret className="mt-auto h-1 w-2 text-[#505050]" />
        </div>
      </div>
      <div className="flex h-10 shrink-0 items-center font-['Open_Sans',sans-serif] [background-image:linear-gradient(90deg,#1b1b1b_0,#1b1f21_90px,#21373f_180px,#20343f_950px,#1d2c42_1200px,#1b2644_1500px,#1b2644_1800px,#1b1b1b_1880px)]">
        <Cell className="w-12"><WindowsLogo className="size-4" /></Cell>
        <Cell className="w-12"><svg viewBox="0 0 24 24" className="size-[22px]" fill="none" stroke="#fff" strokeWidth="2"><circle cx="14" cy="9.500" r="8" /><path d="M8.500 15.500 1.500 23" /></svg></Cell>
        <Cell className="w-12"><TaskView className="size-4" /></Cell>
        <div className="ml-[3px] flex h-full">
          {APPS.map((a) => (
            <div key={a.name} className="relative flex h-full w-[49px] items-center justify-center">
              {a.active && <span className="absolute inset-y-0 right-0 left-0 border-r-4 border-[#3b4854] bg-[#4c5a67]" />}
              <span className="relative size-6">{a.icon}</span>
              {(a.open || a.active) && (
                <span className={a.active ? "absolute bottom-0 left-0 h-0.5 w-12 bg-[#76b9ed]" : "absolute bottom-0 left-1 h-0.5 w-10 bg-[#76b9ed]"} />
              )}
            </div>
          ))}
        </div>
        <div className="mr-[6px] ml-auto flex w-[58px] flex-col items-center text-[11.500px] leading-[18px] tracking-[-0.350px] text-white">
          <span>21:48</span>
          <span>12/08/2024</span>
        </div>
      </div>
    </section>
  );
}

export default function App() {
  return (
    <main className="flex h-[1080px] w-[3840px] overflow-hidden">
      <SheetsWindow />
      <CourseWindow />
    </main>
  );
}
